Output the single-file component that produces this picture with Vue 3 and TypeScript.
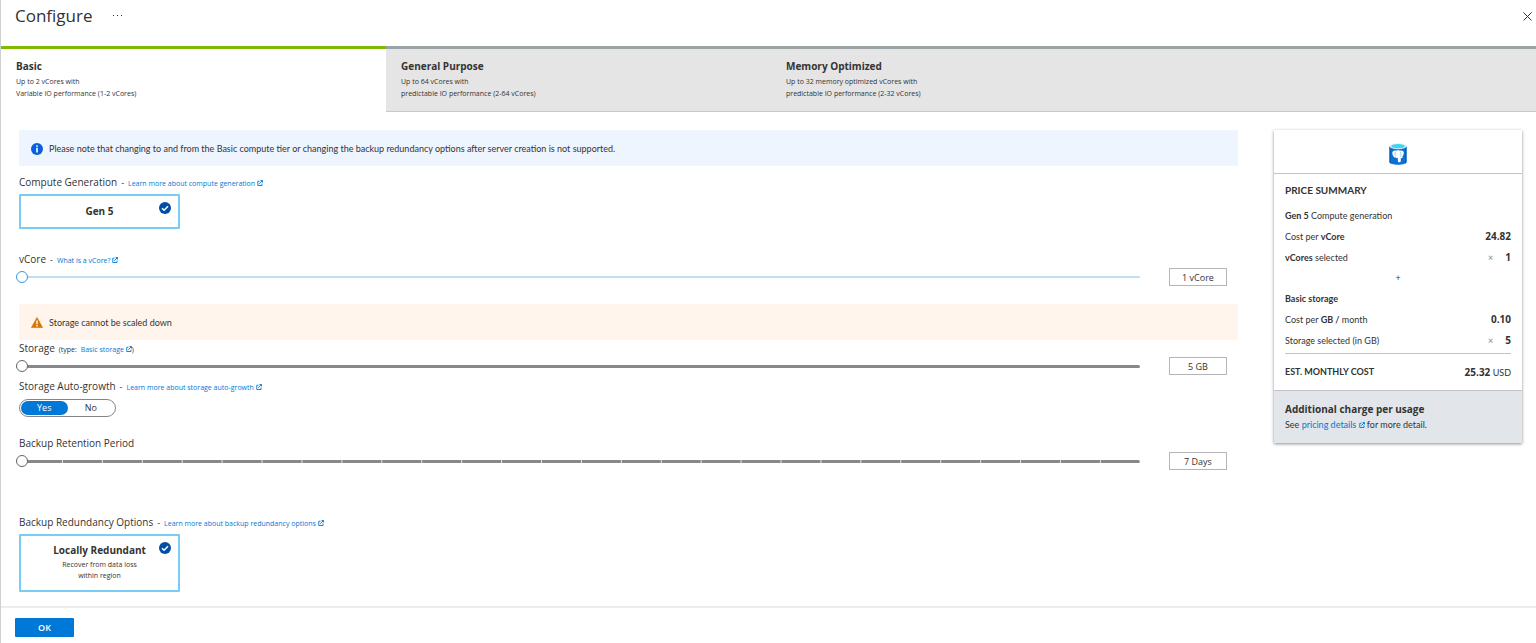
<script setup lang="ts">
import { computed, defineComponent, h, ref } from 'vue'

interface Tier {
  id: string
  name: string
  lines: string[]
}

const tiers: Tier[] = [
  { id: 'basic', name: 'Basic', lines: ['Up to 2 vCores with', 'Variable IO performance (1-2 vCores)'] },
  { id: 'general', name: 'General Purpose', lines: ['Up to 64 vCores with', 'predictable IO performance (2-64 vCores)'] },
  { id: 'memory', name: 'Memory Optimized', lines: ['Up to 32 memory optimized vCores with', 'predictable IO performance (2-32 vCores)'] },
]

const activeTier = ref('basic')
const vCores = ref(1)
const storage = ref(5)
const retention = ref(7)
const autoGrowth = ref('yes')

const vCoreRate = 24.82
const storageRate = 0.1

const vCoreText = computed(() => `${vCores.value} vCore${vCores.value > 1 ? 's' : ''}`)
const storageText = computed(() => `${storage.value} GB`)
const retentionText = computed(() => `${retention.value} Days`)
const total = computed(() => (vCores.value * vCoreRate + storage.value * storageRate).toFixed(2))

const ExternalIcon = defineComponent({
  render: () =>
    h('svg', { viewBox: '0 0 12 12', width: 6, height: 6, fill: 'none', stroke: 'currentColor', 'stroke-width': 1.8, 'aria-hidden': 'true' }, [
      h('path', { d: 'M5 2.5H1.500v8.500H10V7' }),
      h('path', { d: 'M4.500 7.500L10.500 1.500M7 1h4v4' }),
    ]),
})

const CheckIcon = defineComponent({
  render: () =>
    h('svg', { viewBox: '0 0 12 12', width: 12, height: 12, 'aria-hidden': 'true' }, [
      h('circle', { cx: 6, cy: 6, r: 6, fill: '#004ea8' }),
      h('path', { d: 'M3 6.2l2.1 2.1L9 4.2', fill: 'none', stroke: '#fff', 'stroke-width': 1.5 }),
    ]),
})
</script>

<template>
  <div class="page">
    <header class="title-bar">
      <h1>Configure</h1>
      <button class="more" type="button" aria-label="More">
        <svg width="10" height="2" viewBox="0 0 10 2" aria-hidden="true">
          <path d="M0 0h1v1H0zM4 0h1v1H4zM8 0h1v1H8z" fill="#333" />
        </svg>
      </button>
      <button class="close" type="button" aria-label="Close">
        <svg width="9" height="9" viewBox="0 0 9 9" aria-hidden="true">
          <path d="M0.5 0.5l8 8M8.5 0.5l-8 8" stroke="#333" stroke-width="1" />
        </svg>
      </button>
    </header>

    <div class="tabs" role="tablist">
      <button
        v-for="tier in tiers"
        :key="tier.id"
        type="button"
        role="tab"
        class="tab"
        :class="{ active: tier.id === activeTier }"
        :aria-selected="tier.id === activeTier"
        @click="activeTier = tier.id"
      >
        <span class="tab-name">{{ tier.name }}</span>
        <span v-for="line in tier.lines" :key="line" class="tab-line">{{ line }}</span>
      </button>
      <div class="tab-rest"></div>
    </div>

    <div class="content">
      <main class="settings">
        <div class="banner info">
          <svg width="12" height="12" viewBox="0 0 12 12" aria-hidden="true">
            <circle cx="6" cy="6" r="6" fill="#0a5fdc" />
            <path d="M5.2 2.2h1.6v1.6H5.2zM5.2 4.8h1.6v4.8H5.2z" fill="#fff" />
          </svg>
          <span>Please note that changing to and from the Basic compute tier or changing the backup redundancy options after server creation is not supported.</span>
        </div>

        <section class="generation">
          <div class="heading">
            <h2>Compute Generation</h2><span class="dash">-</span>
            <a href="#generation">Learn more about compute generation <ExternalIcon /></a>
          </div>
          <button class="option" type="button" aria-pressed="true">
            <strong>Gen 5</strong>
            <CheckIcon class="check" />
          </button>
        </section>

        <section class="vcore">
          <div class="heading">
            <h2><label for="vcore">vCore</label></h2><span class="dash">-</span>
            <a href="#vcore-help">What is a vCore? <ExternalIcon /></a>
          </div>
          <div class="slider-row">
            <input id="vcore" v-model.number="vCores" class="slider blue" type="range" min="1" max="2" />
            <input class="value" type="text" readonly aria-label="Selected vCores" :value="vCoreText" />
          </div>
        </section>

        <div class="banner warning">
          <svg width="12" height="11" viewBox="0 0 12 11" aria-hidden="true">
            <path d="M6 0.2L11.8 10.8H0.2z" fill="#db7500" stroke="#db7500" stroke-width="0.4" stroke-linejoin="round" />
            <path d="M5.3 3.6h1.4v3.6H5.3zM5.3 8h1.4v1.4H5.3z" fill="#fff" />
          </svg>
          <span>Storage cannot be scaled down</span>
        </div>

        <section class="storage">
          <div class="heading">
            <h2><label for="storage">Storage</label></h2>
            <span class="type">(type: <a href="#basic-storage">Basic storage <ExternalIcon /></a>)</span>
          </div>
          <div class="slider-row">
            <input id="storage" v-model.number="storage" class="slider" type="range" min="5" max="1024" />
            <input class="value" type="text" readonly aria-label="Selected storage" :value="storageText" />
          </div>
        </section>

        <section class="growth">
          <div class="heading">
            <h2>Storage Auto-growth</h2><span class="dash">-</span>
            <a href="#auto-growth">Learn more about storage auto-growth <ExternalIcon /></a>
          </div>
          <div class="toggle" role="radiogroup" aria-label="Storage Auto-growth">
            <label :class="{ on: autoGrowth === 'yes' }"><input v-model="autoGrowth" type="radio" name="growth" value="yes" />Yes</label>
            <label :class="{ on: autoGrowth === 'no' }"><input v-model="autoGrowth" type="radio" name="growth" value="no" />No</label>
          </div>
        </section>

        <section class="retention">
          <div class="heading">
            <h2><label for="retention">Backup Retention Period</label></h2>
          </div>
          <div class="slider-row">
            <input id="retention" v-model.number="retention" class="slider ticks" type="range" min="7" max="35" />
            <input class="value" type="text" readonly aria-label="Selected retention" :value="retentionText" />
          </div>
        </section>

        <section class="redundancy">
          <div class="heading">
            <h2>Backup Redundancy Options</h2><span class="dash">-</span>
            <a href="#redundancy">Learn more about backup redundancy options <ExternalIcon /></a>
          </div>
          <button class="option tall" type="button" aria-pressed="true">
            <strong>Locally Redundant</strong>
            <span>Recover from data loss<br />within region</span>
            <CheckIcon class="check" />
          </button>
        </section>
      </main>

      <aside class="summary">
        <div class="summary-top">
          <svg width="18" height="22" viewBox="0 0 18 22" role="img" aria-label="PostgreSQL">
            <path d="M0.5 3v16c0 1.6 3.8 2.8 8.5 2.8s8.5-1.2 8.5-2.8V3z" fill="#0b72d3" />
            <path d="M0.500 3v16c0 .7.600 1.200 1.500 1.700V3zM16 3v17.700c.9-.5 1.500-1 1.500-1.700V3z" fill="#075db3" />
            <ellipse cx="9" cy="3.200" rx="8.500" ry="3" fill="#e4eef6" />
            <ellipse cx="9" cy="3.200" rx="6.800" ry="2.100" fill="#3fd4f2" />
            <path
              d="M3.300 10c0-2 1.800-2.900 3.800-2.300 1.300-.6 2.800-.5 3.900 0 2.200-.6 4 .3 3.800 2.400-.1 1.500-.8 2.900-1.700 3.900l1.100.3c-.5.6-1.400.8-2.300.6l-.1 2.800c-.1 1.100-.7 1.600-1.400 1.600-.9 0-1.400-.6-1.500-1.600l-.2-3.300c-.6.6-1.500.7-2.300.3l.5-.7c-.6.5-1.100.7-1.600.3-1.200-1-2-2.900-2-4.300z"
              fill="#fff"
            />
            <path d="M6.500 8.700c-.6 1.500-.5 3.200.1 4.700M11.300 8.700c.8 1.400.8 3.300.2 4.900" fill="none" stroke="#7db8ea" stroke-width="0.7" />
          </svg>
        </div>
        <div class="summary-body">
          <h3>PRICE SUMMARY</h3>
          <div class="line"><span><b>Gen 5</b> Compute generation</span></div>
          <div class="line"><span>Cost per <b>vCore</b></span><strong>{{ vCoreRate.toFixed(2) }}</strong></div>
          <div class="line"><span><b>vCores</b> selected</span><span class="count"><i>×</i><strong>{{ vCores }}</strong></span></div>
          <div class="plus">+</div>
          <div class="line"><b>Basic storage</b></div>
          <div class="line"><span>Cost per <b>GB /</b> month</span><strong>{{ storageRate.toFixed(2) }}</strong></div>
          <div class="line"><span>Storage selected (in GB)</span><span class="count"><i>×</i><strong>{{ storage }}</strong></span></div>
          <div class="total"><b>EST. MONTHLY COST</b><span><strong>{{ total }}</strong> USD</span></div>
        </div>
        <div class="summary-foot">
          <h4>Additional charge per usage</h4>
          <p>See <a href="#pricing">pricing details <ExternalIcon /></a> for more detail.</p>
        </div>
      </aside>
    </div>

    <footer class="footer">
      <button class="ok" type="button">OK</button>
    </footer>
  </div>
</template>

<style>
body {
  margin: 0;
  background: #fff;
}
</style>

<style scoped>
.page {
  display: flex;
  flex-direction: column;
  min-height: 100vh;
  box-sizing: border-box;
  border-left: 1px solid #d0d0d0;
  font: 9px/12px "Segoe UI", "Open Sans", "Noto Sans", sans-serif;
  color: #333;
}

button,
input {
  font: inherit;
  color: inherit;
}

h1,
h2,
h3,
h4,
p {
  margin: 0;
}

a {
  color: #0078d4;
  text-decoration: none;
}

.title-bar {
  display: flex;
  align-items: center;
  height: 32px;
  padding: 0 4px 14px 14px;
}

h1 {
  font-size: 17px;
  line-height: 24px;
  font-weight: 500;
}

.more,
.close {
  display: flex;
  padding: 0;
  border: 0;
  background: none;
}

.more {
  margin-left: 20px;
}

.close {
  margin-left: auto;
}

.tabs {
  display: grid;
  grid-template-columns: repeat(3, minmax(0, 385px)) 1fr;
}

.tab,
.tab-rest {
  box-sizing: border-box;
  height: 66px;
  border: 0;
  border-top: 3px solid #9ba3a7;
  border-bottom: 1px solid #c8c8c8;
  border-radius: 0;
  background: #e5e5e5;
}

.tab {
  display: flex;
  flex-direction: column;
  justify-content: flex-start;
  padding: 10px 15px 0;
  text-align: left;
}

.tab.active {
  border-top-color: #7fba00;
  border-bottom-color: #fff;
  background: #fff;
}

.tab-name {
  margin-bottom: 3px;
  font-size: 10px;
  line-height: 14px;
  font-weight: 700;
}

.tab-line {
  font-size: 7px;
  line-height: 12px;
}

.content {
  display: grid;
  grid-template-columns: minmax(0, 1fr) 248px;
  align-items: start;
  gap: 36px;
  flex: 1;
  padding: 18px 14px 14px 18px;
}

.banner {
  display: flex;
  align-items: center;
  gap: 6px;
  box-sizing: border-box;
  height: 36px;
  padding: 1px 0 0 12px;
  font-family: "Segoe UI", Lato, sans-serif;
}

.info {
  background: #eff5fe;
}

.warning {
  margin-top: 17px;
  background: #fff5ed;
}

.heading {
  display: flex;
  align-items: baseline;
  height: 14px;
  line-height: 14px;
  white-space: nowrap;
}

.heading a,
.type {
  font-size: 7px;
}

h2 {
  font-size: 10px;
  line-height: 14px;
  font-weight: 500;
}

.dash {
  margin: 0 4px;
}

.type {
  margin-left: 4px;
}

.type a {
  margin-left: 2px;
}

.generation {
  margin-top: 9px;
}

.option {
  position: relative;
  display: flex;
  flex-direction: column;
  align-items: center;
  justify-content: center;
  box-sizing: border-box;
  width: 161px;
  height: 35px;
  margin-top: 5px;
  padding: 0 0 2px;
  border: 2px solid #7accf5;
  border-radius: 1px;
  background: #fff;
}

.option strong {
  font-size: 10px;
  line-height: 14px;
  font-weight: 700;
}

.option span {
  margin-top: 2px;
  font-size: 7px;
  line-height: 11px;
}

.option.tall {
  height: 58px;
}

.check {
  position: absolute;
  top: 6px;
  right: 7px;
}

.vcore {
  margin-top: 23px;
}

.slider-row {
  display: flex;
  align-items: center;
  gap: 29px;
  height: 20px;
  margin: 1px 11px 0 -3px;
}

.slider {
  flex: 1;
  min-width: 0;
  height: 12px;
  margin: 0;
  appearance: none;
  background: none;
}

.slider::-webkit-slider-runnable-track {
  height: 3px;
  border-radius: 2px;
  background: #888;
}

.slider.blue::-webkit-slider-runnable-track {
  height: 2px;
  background: #bfdff7;
}

.slider.ticks::-webkit-slider-runnable-track {
  background: linear-gradient(to right, #e4e4e4 1px, #888 1px) 6px 0 / calc((100% - 6px) / 28) 100%;
}

.slider::-webkit-slider-thumb {
  appearance: none;
  box-sizing: border-box;
  width: 12px;
  height: 12px;
  margin-top: -5px;
  border: 1px solid #666;
  border-radius: 50%;
  background: #fff;
}

.slider.blue::-webkit-slider-thumb {
  border-color: #3b96dd;
}

.value {
  box-sizing: border-box;
  width: 58px;
  height: 18px;
  padding: 0;
  border: 1px solid #b5b5b5;
  border-radius: 0;
  text-align: center;
}

.storage {
  margin-top: 1px;
}

.growth {
  margin-top: 3px;
}

.toggle {
  display: flex;
  box-sizing: border-box;
  width: 97px;
  height: 18px;
  margin-top: 6px;
  padding: 1px;
  border: 1px solid #858585;
  border-radius: 9px;
}

.toggle label {
  position: relative;
  flex: 1;
  border-radius: 7px;
  line-height: 14px;
  text-align: center;
}

.toggle input {
  position: absolute;
  inset: 0;
  margin: 0;
  opacity: 0;
}

.toggle .on {
  background: #0078d7;
  color: #fff;
}

.retention {
  margin-top: 19px;
}

.redundancy {
  margin-top: 44px;
}

.summary {
  background: #fff;
  box-shadow: 0 1px 3px rgba(0, 0, 0, 0.45);
}

.summary-top {
  display: flex;
  align-items: center;
  justify-content: center;
  box-sizing: border-box;
  height: 44px;
  padding-top: 4px;
  border-bottom: 1px solid #c4c4c4;
}

.summary-body {
  padding: 9px 11px 0;
}

h3 {
  margin-bottom: 8px;
  font-size: 10px;
  line-height: 14px;
  font-weight: 700;
  font-family: "Segoe UI", Lato, sans-serif;
}

b {
  font-weight: 700;
}

.line {
  display: flex;
  align-items: center;
  justify-content: space-between;
  font-family: "Segoe UI", Lato, sans-serif;
  line-height: 21px;
}

.line strong,
.total strong {
  font-size: 10px;
  font-family: "Segoe UI", "Open Sans", sans-serif;
}

.count {
  display: flex;
  gap: 12px;
}

.count i {
  color: #888;
  font-style: normal;
}

.plus {
  line-height: 20px;
  text-align: center;
}

.total {
  display: flex;
  align-items: center;
  justify-content: space-between;
  height: 36px;
  margin-top: 2px;
  border-top: 1px solid #c4c4c4;
  font-family: "Segoe UI", Lato, sans-serif;
}

.summary-foot {
  padding: 11px 11px 12px;
  border-top: 1px solid #c4c4c4;
  background: #e2e6ea;
}

h4 {
  font-size: 10px;
  line-height: 14px;
  font-weight: 700;
}

.summary-foot p {
  padding-top: 3px;
  font-family: "Segoe UI", Lato, sans-serif;
}

.footer {
  padding: 10px 14px 6px;
  border-top: 2px solid #ececec;
}

.ok {
  display: block;
  width: 59px;
  height: 19px;
  padding: 0;
  border: 0;
  border-radius: 1px;
  background: #0078d7;
  color: #fff;
  font-weight: 600;
}
</style>
